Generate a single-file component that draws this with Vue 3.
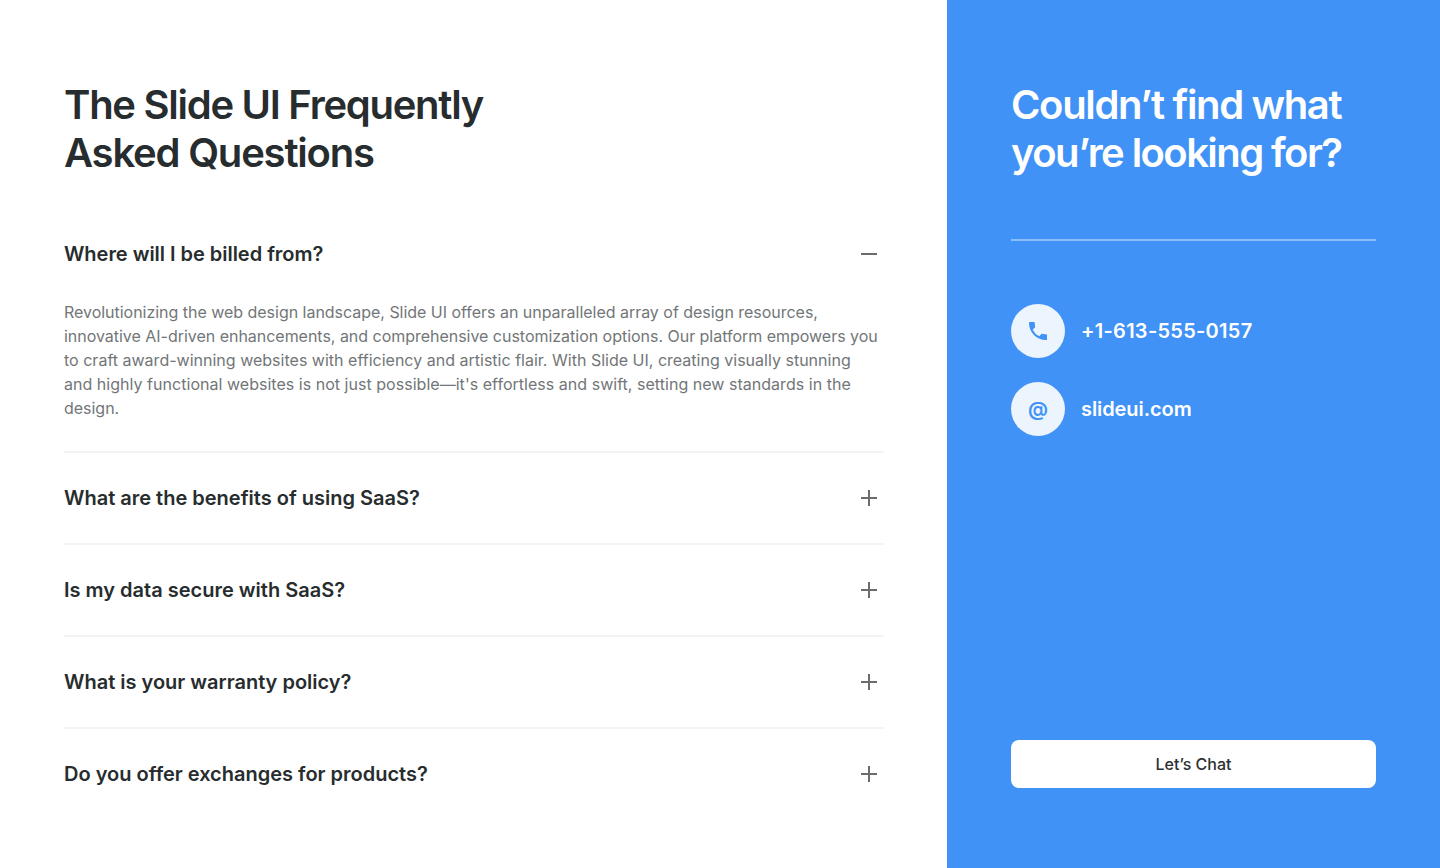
<script setup>
const questions = [
  { q: 'Where will I be billed from?', open: true },
  { q: 'What are the benefits of using SaaS?' },
  { q: 'Is my data secure with SaaS?' },
  { q: 'What is your warranty policy?' },
  { q: 'Do you offer exchanges for products?' },
]
const lines = [
  'Revolutionizing the web design landscape, Slide UI offers an unparalleled array of design resources,',
  'innovative AI-driven enhancements, and comprehensive customization options. Our platform empowers you',
  'to craft award-winning websites with efficiency and artistic flair. With Slide UI, creating visually stunning',
  "and highly functional websites is not just possible—it's effortless and swift, setting new standards in the",
  'design.',
]
</script>

<template>
  <div class="page">
    <main class="faq">
      <h1>The Slide UI Frequently<br /><span class="second">Asked Questions</span></h1>
      <section v-for="item in questions" :key="item.q" class="item" :class="{ open: item.open }">
        <div class="head">
          <h2>{{ item.q }}</h2>
          <svg class="toggle" width="18" height="18" viewBox="0 0 18 18" fill="none" stroke="#6c6c6e" stroke-width="2">
            <path d="M1 9H17" />
            <path v-if="!item.open" d="M9 1V17" />
          </svg>
        </div>
        <p v-if="item.open"><span v-for="l in lines" :key="l">{{ l }}</span></p>
      </section>
    </main>
    <aside class="side">
      <h1>Couldn’t find what<br /><span class="second">you’re looking for?</span></h1>
      <div class="rule"></div>
      <div class="contact">
        <span class="disc">
          <svg width="24" height="24" viewBox="0 0 24 24" fill="#4092f7">
            <path d="M21 15.46l-5.27-.61-2.52 2.52a15.045 15.045 0 0 1-6.59-6.59l2.53-2.53L8.54 3H3.03C2.45 13.18 10.82 21.55 21 20.97v-5.51z" />
          </svg>
        </span>
        <strong class="phone">+1-613-555-0157</strong>
      </div>
      <div class="contact">
        <span class="disc at">@</span>
        <strong class="domain">slideui.com</strong>
      </div>
      <button>Let’s Chat</button>
    </aside>
  </div>
</template>

<style>
body { margin: 0; }
</style>
<style scoped>
.page { display: flex; width: 1440px; height: 868px; background: #fff; font-family: Inter, "Liberation Sans", sans-serif; overflow: hidden; }
.faq { box-sizing: border-box; width: 947px; padding: 81px 63px 0 64px; }
h1 { margin: 0; font-size: 40px; line-height: 48px; font-weight: 600; letter-spacing: -1.27px; color: #272c2e; white-space: nowrap; }
.faq h1 { margin-bottom: 32px; }
.faq .second { letter-spacing: -1.2px; }
.item { box-sizing: border-box; height: 92px; border-bottom: 2px solid #f2f3f3; }
.item.open { height: 244px; }
.item:last-child { border-bottom: 0; }
.head { display: flex; justify-content: space-between; align-items: center; height: 90px; padding-right: 6px; }
h2 { margin: 0; font-size: 20px; line-height: 28px; font-weight: 600; color: #272c2e; white-space: nowrap; }
.open h2 { letter-spacing: -0.03px; }
p { margin: 1px 0 0; font-size: 16px; line-height: 24px; color: #727678; }
p span { display: block; white-space: nowrap; letter-spacing: -0.025px; }
p span:nth-child(3) { letter-spacing: 0.01px; }
p span:nth-child(4) { letter-spacing: 0.03px; }
.side { box-sizing: border-box; display: flex; flex-direction: column; width: 493px; padding: 81px 64px 80px; background: #4092f7; color: #fff; }
.side h1 { color: #fff; letter-spacing: -1.35px; }
.side .second { letter-spacing: -1.57px; }
.rule { flex: none; height: 2px; margin: 62px 0 63px; background: #8cbefa; }
.contact { display: flex; align-items: center; gap: 16px; height: 54px; margin-bottom: 24px; }
.contact strong { font-size: 20px; line-height: 28px; font-weight: 600; }
.contact .phone { letter-spacing: 0.28px; }
.contact .domain { letter-spacing: -0.08px; }
.disc { display: flex; align-items: center; justify-content: center; width: 54px; height: 54px; border-radius: 50%; background: #ecf4fe; }
.at { color: #4092f7; font-size: 20px; font-weight: 600; }
button { margin-top: auto; height: 48px; border: 0; border-radius: 8px; background: #fff; font: 500 16px/24px Inter, sans-serif; color: #2c3032; }
</style>
